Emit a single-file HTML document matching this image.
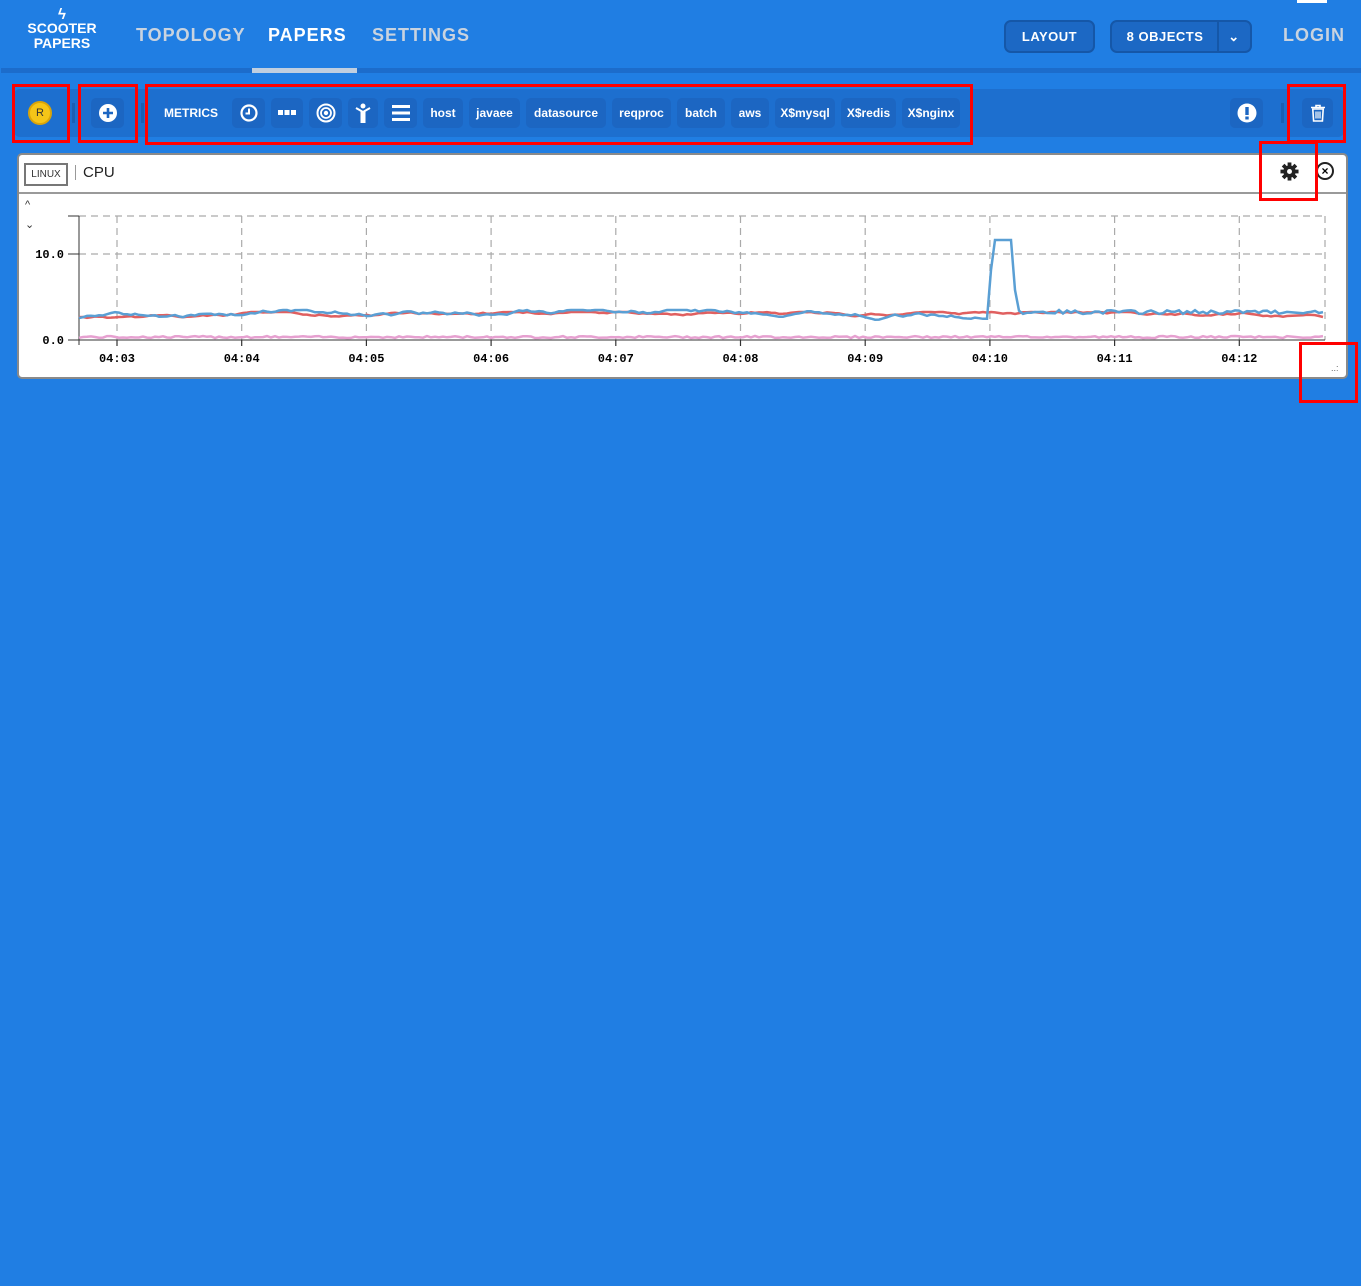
<!DOCTYPE html>
<html><head><meta charset="utf-8"><style>
*{box-sizing:border-box;margin:0;padding:0}
body{width:1361px;height:1286px;background:#207ee3;font-family:"Liberation Sans",sans-serif;position:relative;overflow:hidden}
.abs{position:absolute}
.nav{font-weight:bold;font-size:18px;letter-spacing:1px;color:#c9d3df;top:25px}
.btn{position:absolute;background:#1c68c4;border:2px solid #1557a8;border-radius:7px;color:#fff;font-weight:bold;font-size:13px;letter-spacing:.5px;text-align:center}
.tb{position:absolute;top:98px;height:30px;background:#1c66c2;border-radius:5px;color:#fff;font-weight:bold;font-size:12px;line-height:30px;text-align:center}
.tb svg{position:absolute;left:50%;top:50%;transform:translate(-50%,-50%)}
.red{position:absolute;border:3px solid #ff0000}
</style></head><body>
<div class="abs" style="left:1297px;top:0;width:30px;height:3px;background:#fff"></div>
<div class="abs" style="left:24px;top:8px;width:76px;text-align:center;color:#fff;font-weight:bold;font-size:14px;line-height:15px">
<div style="font-size:15px;line-height:13px">ϟ</div>SCOOTER<br>PAPERS</div>
<div class="abs nav" style="left:136px">TOPOLOGY</div>
<div class="abs nav" style="left:268px;color:#fff">PAPERS</div>
<div class="abs nav" style="left:372px">SETTINGS</div>
<div class="abs nav" style="left:1283px">LOGIN</div>
<div class="abs" style="left:1px;top:68px;width:1360px;height:5px;background:#1c6ccb"></div>
<div class="abs" style="left:252px;top:68px;width:105px;height:5px;background:#c0cfe0"></div>
<div class="btn" style="left:1004px;top:20px;width:91px;height:33px;line-height:29px">LAYOUT</div>
<div class="btn" style="left:1110px;top:20px;width:142px;height:33px;line-height:29px"><span style="display:inline-block;width:106px;border-right:2px solid #1557a8">8 OBJECTS</span><span style="display:inline-block;width:30px">⌄</span></div>

<div class="abs" style="left:14px;top:89px;width:1330px;height:48px;background:#1d6fcf;border-radius:6px"></div>
<div class="abs" style="left:72px;top:103px;width:3px;height:20px;background:#1a5fb3"></div>
<div class="abs" style="left:141px;top:103px;width:3px;height:20px;background:#1a5fb3"></div>
<div class="abs" style="left:1281px;top:103px;width:3px;height:20px;background:#1a5fb3"></div>
<div class="abs" style="left:28px;top:101px;width:24px;height:24px;border-radius:50%;background:#f5c518;border:2px solid #d9a40a;font-size:11px;text-align:center;line-height:20px;color:#333">R</div>
<div class="tb" style="left:91px;width:33px"><svg width="18" height="18"><circle cx="9" cy="9" r="9" fill="#fff"/><path d="M9 4v10M4 9h10" stroke="#1c66c2" stroke-width="2.6"/></svg></div>
<div class="tb" style="left:158px;width:66px;background:none">METRICS</div>
<div class="tb" style="left:232px;width:33px"><svg width="18" height="18"><circle cx="9" cy="9" r="7.5" fill="none" stroke="#fff" stroke-width="2.2"/><path d="M9 4.5V9.5H5.5" fill="none" stroke="#fff" stroke-width="2"/></svg></div>
<div class="tb" style="left:271px;width:32px"><svg width="18" height="6"><rect x="0" y="0" width="5" height="5" fill="#fff"/><rect x="6.5" y="0" width="5" height="5" fill="#fff"/><rect x="13" y="0" width="5" height="5" fill="#fff"/></svg></div>
<div class="tb" style="left:309px;width:33px"><svg width="20" height="20"><circle cx="10" cy="10" r="8.5" fill="none" stroke="#fff" stroke-width="2"/><circle cx="10" cy="10" r="5" fill="none" stroke="#fff" stroke-width="1.8"/><circle cx="10" cy="10" r="2.2" fill="#fff"/></svg></div>
<div class="tb" style="left:348px;width:30px"><svg width="16" height="20"><circle cx="8" cy="3" r="2.5" fill="#fff"/><path d="M1 5l7 4 7-4" fill="none" stroke="#fff" stroke-width="2"/><rect x="5.5" y="8" width="5" height="12" fill="#fff"/></svg></div>
<div class="tb" style="left:384px;width:33px"><svg width="18" height="16"><rect y="0" width="18" height="3" fill="#fff"/><rect y="6.5" width="18" height="3" fill="#fff"/><rect y="13" width="18" height="3" fill="#fff"/></svg></div>
<div class="tb" style="left:423px;width:40px">host</div>
<div class="tb" style="left:469px;width:51px">javaee</div>
<div class="tb" style="left:526px;width:80px">datasource</div>
<div class="tb" style="left:612px;width:59px">reqproc</div>
<div class="tb" style="left:677px;width:48px">batch</div>
<div class="tb" style="left:731px;width:38px">aws</div>
<div class="tb" style="left:775px;width:60px">X$mysql</div>
<div class="tb" style="left:841px;width:55px">X$redis</div>
<div class="tb" style="left:902px;width:58px">X$nginx</div>
<div class="tb" style="left:1230px;width:33px"><svg width="20" height="20"><circle cx="10" cy="10" r="9.5" fill="#fff"/><rect x="8.3" y="4" width="3.4" height="8" fill="#1c66c2"/><rect x="8.3" y="13.5" width="3.4" height="3" fill="#1c66c2"/></svg></div>
<div class="tb" style="left:1302px;width:31px"><svg width="16" height="18"><path d="M1 3.5h14M6 3.5V1.5h4v2" fill="none" stroke="#fff" stroke-width="1.6"/><path d="M2.8 5h10.4l-.8 12H3.6z" fill="none" stroke="#fff" stroke-width="1.6"/><path d="M6 7.5v7M8 7.5v7M10 7.5v7" stroke="#fff" stroke-width="1.2"/></svg></div>

<div class="abs" style="left:17px;top:153px;width:1331px;height:226px;background:#fff;border:2px solid #8a8a8a;border-radius:5px"></div>
<div class="abs" style="left:19px;top:192px;width:1327px;height:2px;background:#9a9a9a"></div>
<div class="abs" style="left:24px;top:163px;width:44px;height:23px;border:2px solid #777;font-size:10px;line-height:19px;text-align:center;color:#333">LINUX</div>
<div class="abs" style="left:75px;top:165px;width:1px;height:15px;background:#999"></div>
<div class="abs" style="left:83px;top:164px;font-size:15px;color:#222">CPU</div>
<svg class="abs" style="left:1280px;top:162px" width="19" height="19" viewBox="0 0 20 20"><g fill="#222"><circle cx="10" cy="10" r="6.5"/><g id="teeth"><rect x="8" y="0.5" width="4" height="4"/><rect x="8" y="15.5" width="4" height="4"/><rect x="0.5" y="8" width="4" height="4"/><rect x="15.5" y="8" width="4" height="4"/></g><use href="#teeth" transform="rotate(45 10 10)"/></g><circle cx="10" cy="10" r="2.6" fill="#fff"/></svg>
<div class="abs" style="left:1316px;top:162px;width:18px;height:18px;border:2px solid #222;border-radius:50%;font-size:12px;line-height:14px;text-align:center;font-weight:bold">×</div>
<div class="abs" style="left:25px;top:199px;font-size:11px;color:#333">^</div>
<div class="abs" style="left:25px;top:218px;font-size:11px;color:#333">⌄</div>
<div class="abs" style="left:1331px;top:363px;font-size:9px;color:#666">..:</div>

<svg class="abs" style="left:0;top:0" width="1361" height="400" id="ch">
<g stroke="#aaa" stroke-dasharray="7,5" stroke-width="1.2">
<line x1="79" y1="216" x2="1325" y2="216"/><line x1="79" y1="254" x2="1325" y2="254"/>
</g>
<g id="vg" stroke="#aaa" stroke-width="1.2" stroke-dasharray="7,5"></g>
<line x1="79" y1="216" x2="79" y2="345" stroke="#333"/>
<line x1="79" y1="340" x2="1325" y2="340" stroke="#333"/>
<line x1="68" y1="216" x2="79" y2="216" stroke="#333"/>
<line x1="68" y1="254" x2="79" y2="254" stroke="#333"/>
<line x1="68" y1="340" x2="79" y2="340" stroke="#333"/>
<text x="64" y="258" text-anchor="end" font-size="12" font-weight="bold" font-family="Liberation Mono">10.0</text>
<text x="64" y="344" text-anchor="end" font-size="12" font-weight="bold" font-family="Liberation Mono">0.0</text>
<g id="tx" font-size="12" font-weight="bold" font-family="Liberation Mono" text-anchor="middle"></g>
<polyline id="pk" fill="none" stroke="#e6a0d0" stroke-width="2.5"/>
<polyline id="rd" fill="none" stroke="#e06060" stroke-width="2.5"/>
<polyline id="bl" fill="none" stroke="#5a9fd4" stroke-width="2.5"/>
</svg>

<div class="red" style="left:12px;top:84px;width:58px;height:59px"></div>
<div class="red" style="left:78px;top:84px;width:60px;height:59px"></div>
<div class="red" style="left:145px;top:84px;width:828px;height:61px"></div>
<div class="red" style="left:1287px;top:84px;width:59px;height:59px"></div>
<div class="red" style="left:1259px;top:141px;width:59px;height:60px"></div>
<div class="red" style="left:1299px;top:342px;width:59px;height:61px"></div>
<script>
var vg=document.getElementById('vg'),tx=document.getElementById('tx'),s='';var t='';
for(var i=0;i<10;i++){var x=117+i*124.7;s+='<line x1="'+x+'" y1="216" x2="'+x+'" y2="340"/><line x1="'+x+'" y1="340" x2="'+x+'" y2="346" stroke="#333" stroke-dasharray="none"/>';t+='<text x="'+x+'" y="362">04:'+(i<7?'0':'')+(i+3)+'</text>';}
s+='<line x1="1325" y1="216" x2="1325" y2="340"/>';
vg.innerHTML=s;tx.innerHTML=t;
var seed=7;function r(){seed=(seed*9301+49297)%233280;return seed/233280;}
var b=[],rd=[],pk=[];var bv=318,rv=317;
for(var x=79;x<=1325;x+=4){
 if(x>1290&&x<1300)continue;
 bv+=(r()-.5)*3;bv=Math.max(310,Math.min(324,bv));
 rv+=(r()-.5)*2;rv=Math.max(312,Math.min(322,rv));
 var by=bv;
 if(x>=991&&x<995)by=270;if(x>=995&&x<1012)by=240;if(x>=1012&&x<1018)by=290;
 if(x>1018)by=Math.min(by,314-(r()*4));
 b.push(x+','+by.toFixed(1));rd.push(x+','+rv.toFixed(1));pk.push(x+','+(338-r()*2).toFixed(1));
}
document.getElementById('bl').setAttribute('points',b.join(' '));
document.getElementById('rd').setAttribute('points',rd.join(' '));
document.getElementById('pk').setAttribute('points',pk.join(' '));
</script>
</body></html>
